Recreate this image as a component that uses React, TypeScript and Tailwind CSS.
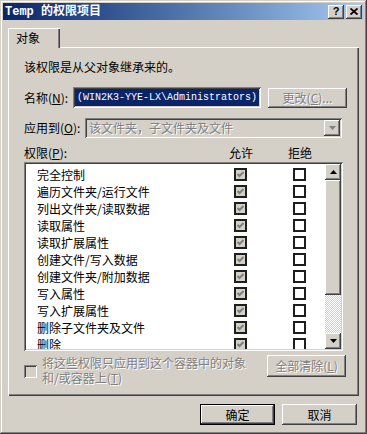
import React from 'react'

const raised =
  'shadow-[inset_-1px_-1px_#404040,inset_1px_1px_#ffffff,inset_-2px_-2px_#808080,inset_2px_2px_#d4d0c8]'
const sunken =
  'shadow-[inset_1px_1px_#808080,inset_-1px_-1px_#ffffff,inset_2px_2px_#404040,inset_-2px_-2px_#d4d0c8]'
const disabledText = 'text-[#808080] [text-shadow:1px_1px_0_#ffffff]'

const permissions = [
  '完全控制',
  '遍历文件夹/运行文件',
  '列出文件夹/读取数据',
  '读取属性',
  '读取扩展属性',
  '创建文件/写入数据',
  '创建文件夹/附加数据',
  '写入属性',
  '写入扩展属性',
  '删除子文件夹及文件',
  '删除',
]

const CheckBox: React.FC<{ checked?: boolean; grey?: boolean }> = ({ checked, grey }) => (
  <span
    className={`w-[13px] h-[13px] shrink-0 border-2 border-[#1e1e1e] flex items-center justify-center ${
      grey ? 'bg-[#d4d0c8]' : 'bg-white'
    }`}
  >
    {checked && (
      <svg width="7" height="7" viewBox="0 0 7 7">
        <polyline points="0.5,3 2.5,5 6.5,1" fill="none" stroke="#808080" strokeWidth="2" />
      </svg>
    )}
  </span>
)

const Arrow: React.FC<{ up?: boolean; color?: string }> = ({ up, color = '#000' }) => (
  <svg width="7" height="4" viewBox="0 0 7 4">
    <polygon points={up ? '3.5,0 7,4 0,4' : '0,0 7,0 3.5,4'} fill={color} />
  </svg>
)

export default function App() {
  return (
    <div className="w-[367px] h-[434px] relative overflow-hidden bg-[#d4d0c8] p-[3px] flex flex-col text-[12px] text-black font-['Noto_Sans_CJK_SC',sans-serif] shadow-[inset_-1px_-1px_#404040,inset_1px_1px_#d4d0c8,inset_-2px_-2px_#808080,inset_2px_2px_#ffffff]">
      {/* title bar */}
      <div className="h-[17px] bg-linear-to-r from-[#0a246a] to-[#a6caf0] flex items-center pl-[2px] pr-[2px]">
        <span className="text-white font-bold leading-[16px] font-['Liberation_Mono','Noto_Sans_CJK_SC',monospace]">
          Temp 的权限项目
        </span>
        <div className="ml-auto flex gap-[2px]">
          <span className={`w-[16px] h-[14px] bg-[#d4d0c8] ${raised} flex items-center justify-center font-bold text-[11px] leading-none font-['Liberation_Sans',sans-serif]`}>
            ?
          </span>
          <span className={`w-[16px] h-[14px] bg-[#d4d0c8] ${raised} flex items-center justify-center`}>
            <svg width="8" height="7" viewBox="0 0 8 7">
              <path d="M0.5 0.5 L7.5 6.5 M7.5 0.5 L0.5 6.5" stroke="#000" strokeWidth="1.8" />
            </svg>
          </span>
        </div>
      </div>

      {/* tab */}
      <div className="mt-[8px] ml-[5px] w-[52px] h-[20px] -mb-[1px] relative z-10 bg-[#d4d0c8] shadow-[inset_1px_1px_#ffffff,inset_-1px_0_#404040,inset_-2px_0_#808080] pl-[8px] pt-[2px] leading-[16px]">
        对象
      </div>

      {/* panel */}
      <div className="ml-[5px] w-[351px] h-[349px] bg-[#d4d0c8] shadow-[inset_1px_1px_#ffffff,inset_-1px_-1px_#404040,inset_-2px_-2px_#808080] pl-[16px] pt-[12px] flex flex-col">
        <div className="h-[16px] leading-[16px]">该权限是从父对象继承来的。</div>

        <div className="mt-[12px] h-[21px] flex items-center">
          <span className="w-[49px] leading-[16px]">
            名称(<u>N</u>):
          </span>
          <div className={`w-[188px] h-[21px] bg-white ${sunken} p-[2px]`}>
            <div className="h-full bg-[#0a246a] text-white flex items-center px-[2px] text-[10px] whitespace-nowrap overflow-hidden font-['Liberation_Mono',monospace]">
              (WIN2K3-YYE-LX\Administrators)
            </div>
          </div>
          <div className={`ml-[7px] w-[79px] h-[20px] ${raised} flex items-center justify-center leading-[16px] ${disabledText}`}>
            更改(<u>C</u>)...
          </div>
        </div>

        <div className="mt-[10px] h-[20px] flex items-center">
          <span className="w-[61px] leading-[16px]">
            应用到(<u>O</u>):
          </span>
          <div className={`w-[257px] h-[20px] ${sunken} p-[2px] flex items-center`}>
            <span className={`pl-[2px] leading-[16px] ${disabledText}`}>该文件夹，子文件夹及文件</span>
            <span className={`ml-auto w-[16px] h-[16px] ${raised} flex items-center justify-center`}>
              <Arrow color="#808080" />
            </span>
          </div>
        </div>

        <div className="mt-[7px] h-[16px] flex items-center leading-[16px]">
          <span className="w-[205px]">
            权限(<u>P</u>):
          </span>
          <span className="w-[24px]">允许</span>
          <span className="ml-[35px]">拒绝</span>
        </div>

        {/* list */}
        <div className={`mt-[1px] w-[319px] h-[189px] bg-white ${sunken} p-[2px] flex`}>
          <div className="flex-1 overflow-hidden pt-[2px]">
            {permissions.map((p) => (
              <div key={p} className="h-[17px] flex items-center">
                <span className="w-[208px] pl-[11px] leading-[16px] whitespace-nowrap">{p}</span>
                <CheckBox checked grey />
                <span className="ml-[46px]">
                  <CheckBox />
                </span>
              </div>
            ))}
          </div>
          <div className="w-[16px] flex flex-col">
            <span className={`h-[16px] ${raised} bg-[#d4d0c8] flex items-center justify-center`}>
              <Arrow up />
            </span>
            <span className={`h-[115px] ${raised} bg-[#d4d0c8]`} />
            <span className="flex-1 bg-[repeating-conic-gradient(#d4d0c8_0_25%,#ffffff_0_50%)] bg-size-[2px_2px]" />
            <span className={`h-[16px] ${raised} bg-[#d4d0c8] flex items-center justify-center`}>
              <Arrow />
            </span>
          </div>
        </div>

        <div className="mt-[4px] flex">
          <div className="w-[243px] flex">
            <span className={`mt-[10px] w-[13px] h-[13px] ${sunken} bg-[#d4d0c8]`} />
            <div className={`ml-[5px] flex flex-col ${disabledText}`}>
              <span className="leading-[15px]">将这些权限只应用到这个容器中的对象</span>
              <span className="leading-[15px]">
                和/或容器上(<u>T</u>)
              </span>
            </div>
          </div>
          <div className={`w-[79px] h-[22px] ${raised} flex items-center justify-center leading-[16px] ${disabledText}`}>
            全部清除(<u>L</u>)
          </div>
        </div>
      </div>

      {/* dialog buttons */}
      <div className="mt-[8px] flex justify-end gap-[7px] pr-[7px]">
        <div className="w-[75px] h-[21px] border border-black">
          <div className={`w-full h-full ${raised} flex items-center justify-center leading-[16px]`}>确定</div>
        </div>
        <div className={`w-[75px] h-[21px] ${raised} flex items-center justify-center leading-[16px]`}>取消</div>
      </div>
    </div>
  )
}
